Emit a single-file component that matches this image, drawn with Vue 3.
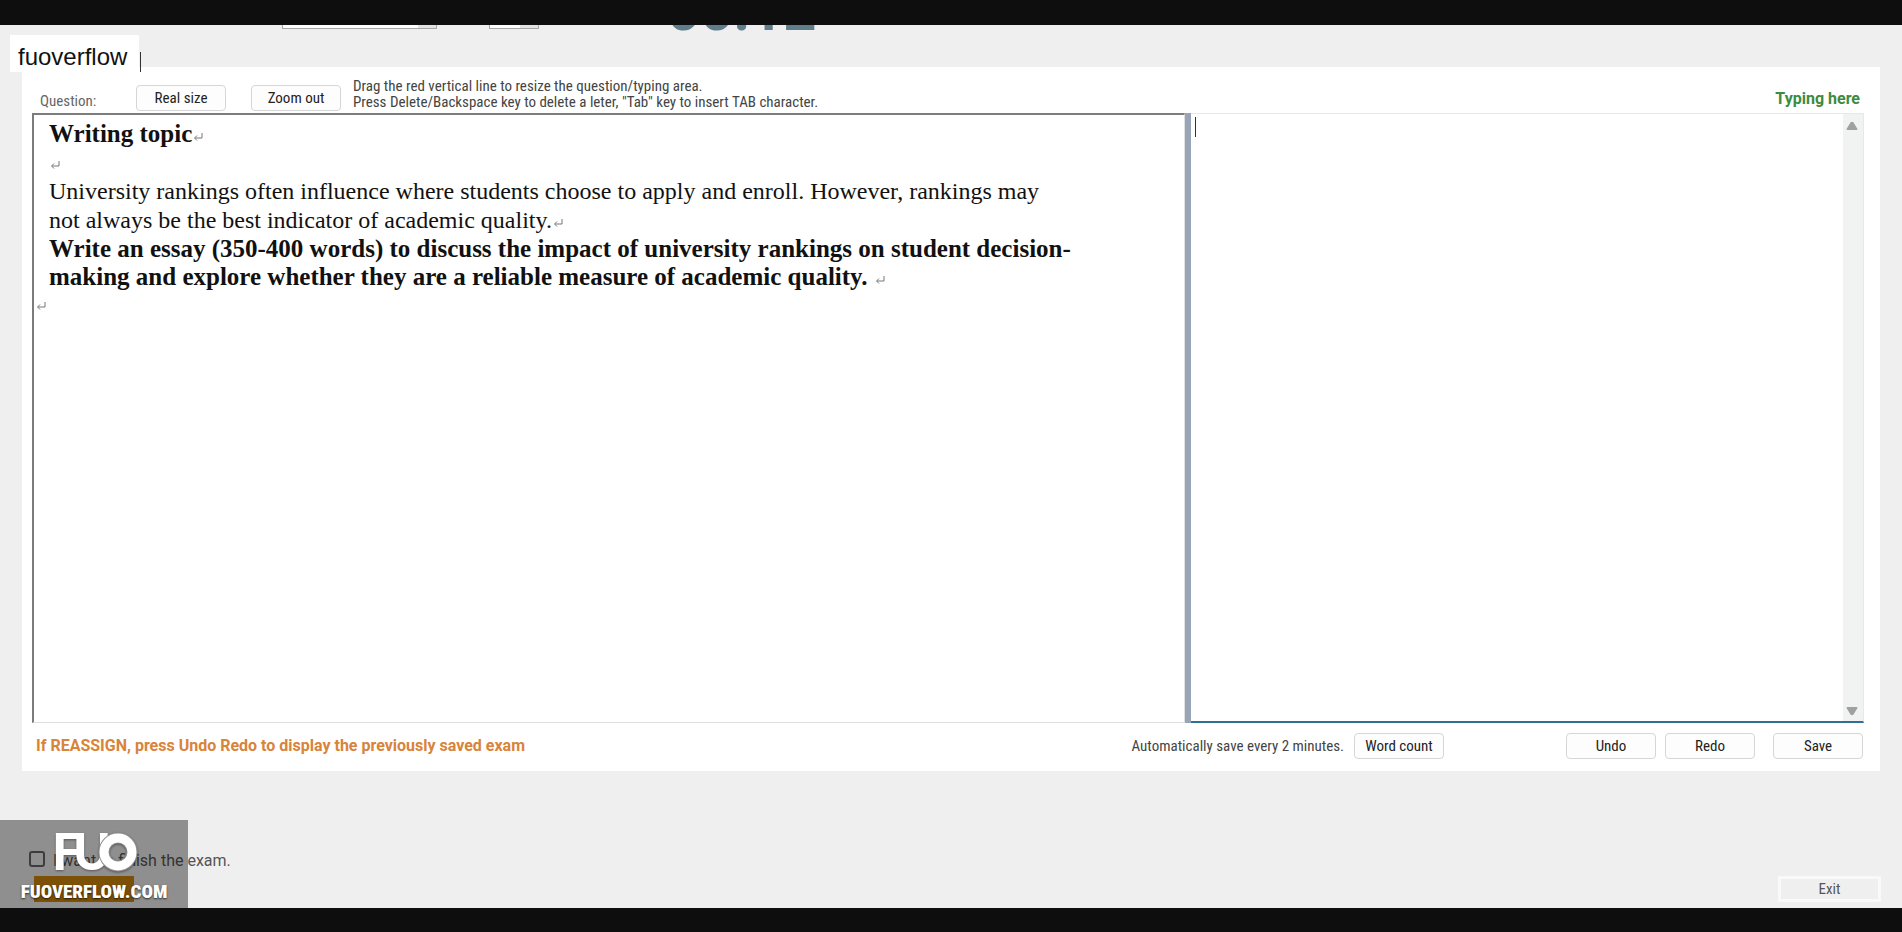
<script setup>
import { ref } from 'vue'

const answer = ref('')
const finished = ref(false)
</script>

<template>
  <div class="screen">
    <div class="bar"></div>

    <header class="head">
      <select class="combo wide" aria-label="Font"></select>
      <select class="combo small" aria-label="Size"></select>
      <span class="timer">00:12</span>
    </header>

    <main class="card">
      <div class="toolbar">
        <span class="label">Question:</span>
        <button type="button" class="btn">Real size</button>
        <button type="button" class="btn second">Zoom out</button>
        <p class="hint">
          Drag the red vertical line to resize the question/typing area.<br />
          Press Delete/Backspace key to delete a leter, "Tab" key to insert TAB character.
        </p>
        <label class="typing" for="answer">Typing here</label>
      </div>

      <div class="panes">
        <section class="question">
          <h1>Writing topic<svg class="ret" viewBox="0 0 10 9"><path d="M9 0v5H2M4 2.500L1.500 5L4 7.500" /></svg></h1>
          <p><svg class="ret" viewBox="0 0 10 9"><path d="M9 0v5H2M4 2.500L1.500 5L4 7.500" /></svg></p>
          <p>University rankings often influence where students choose to apply and enroll. However, rankings may not always be the best indicator of academic quality.<svg class="ret" viewBox="0 0 10 9"><path d="M9 0v5H2M4 2.500L1.500 5L4 7.500" /></svg></p>
          <p class="strong">Write an essay (350-400 words) to discuss the impact of university rankings on student decision-making and explore whether they are a reliable measure of academic quality. <svg class="ret" viewBox="0 0 10 9"><path d="M9 0v5H2M4 2.500L1.500 5L4 7.500" /></svg></p>
          <p class="outer"><svg class="ret" viewBox="0 0 10 9"><path d="M9 0v5H2M4 2.500L1.500 5L4 7.500" /></svg></p>
        </section>
        <div class="splitter"></div>
        <section class="editor">
          <textarea id="answer" v-model="answer"></textarea>
          <span class="caret"></span>
          <div class="scroll">
            <svg viewBox="0 0 12 9"><path d="M4.500 1.500Q6 0 7.500 1.500L11.500 8Q11.500 9 10.500 9H1.500Q.5 9 .5 8z" /></svg>
            <svg viewBox="0 0 12 9"><path d="M4.500 7.500Q6 9 7.500 7.500L11.500 1Q11.500 0 10.500 0H1.500Q.5 0 .5 1z" /></svg>
          </div>
        </section>
      </div>

      <div class="actions">
        <strong class="warn">If REASSIGN, press Undo Redo to display the previously saved exam</strong>
        <span class="auto">Automatically save every 2 minutes.</span>
        <button type="button" class="btn count">Word count</button>
        <button type="button" class="btn undo">Undo</button>
        <button type="button" class="btn redo">Redo</button>
        <button type="button" class="btn">Save</button>
      </div>
    </main>

    <footer class="foot">
      <div class="finish">
        <label class="check"><input v-model="finished" type="checkbox" /><span>I want to finish the exam.</span></label>
        <button type="button" class="submit" aria-label="Finish"></button>
      </div>
      <button type="button" class="exit">Exit</button>
    </footer>

    <div class="bar bottom"></div>

    <div class="tag">fuoverflow<i></i></div>
    <div class="mark">
      <svg class="logo" viewBox="0 0 90 42">
        <g class="letters">
          <text x="3" y="40">F</text>
          <text x="24" y="40">U</text>
          <circle cx="69" cy="22" r="14" class="edge" />
          <circle cx="69" cy="22" r="14" />
        </g>
      </svg>
      <span class="site">FUOVERFLOW.COM</span>
    </div>
  </div>
</template>

<style>
body {
  margin: 0;
}
</style>

<style scoped>
.screen {
  position: relative;
  display: flex;
  flex-direction: column;
  min-height: 100vh;
  background: #efefef;
  color: #444;
  font: 15px/16px "Roboto Condensed", Roboto, "Liberation Sans", sans-serif;
  overflow: hidden;
}
p, h1 {
  margin: 0;
}
button {
  font: inherit;
  padding: 0;
  box-sizing: border-box;
}
.bar {
  height: 25px;
  background: #0e0e0e;
}
.bar.bottom {
  height: 24px;
}
.head {
  display: flex;
  align-items: flex-start;
  height: 42px;
  padding-left: 282px;
  overflow: hidden;
}
.combo {
  appearance: none;
  box-sizing: border-box;
  height: 24px;
  margin-top: -20px;
  border: 1px solid #a8a8a8;
  border-radius: 0;
  background: linear-gradient(#e2e2e2, #e2e2e2) right / 18px 100% no-repeat #fff;
}
.wide {
  width: 155px;
}
.small {
  width: 50px;
  margin-left: 52px;
}
.timer {
  margin: -44px 0 0 128px;
  font: bold 58px/58px Roboto, Arial, sans-serif;
  color: #607d8b;
}
.card {
  flex: 1;
  display: flex;
  flex-direction: column;
  margin: 0 22px;
  padding: 0 16px 0 10px;
  background: #fefffe;
}
.toolbar {
  display: flex;
  align-items: flex-end;
  box-sizing: border-box;
  height: 46px;
  padding: 0 4px 2px 8px;
}
.label {
  width: 96px;
  padding-bottom: 2px;
  color: #666;
}
.btn {
  width: 90px;
  height: 26px;
  border: 1px solid #d6d6d6;
  border-radius: 4px;
  background: #fdfdfd;
  color: #222;
}
.second {
  margin-left: 25px;
}
.hint {
  margin-left: 12px;
  padding-bottom: 1px;
}
.typing {
  margin-left: auto;
  padding-bottom: 4px;
  font-family: Roboto, sans-serif;
  font-size: 16px;
  font-weight: bold;
  color: #3d8b40;
}
.panes {
  flex: 1;
  display: grid;
  grid-template-columns: 1153fr 6px 673fr;
}
.question {
  border: 1px solid #e0e0e0;
  border-top: 2px solid #7c7c7c;
  border-left: 2px solid #7c7c7c;
  padding: 4px 15px;
  color: #111;
  font: 24px/29px "Liberation Serif", "Times New Roman", serif;
}
.question h1,
.question .strong {
  font-size: 25px;
  line-height: 29px;
  font-weight: bold;
}
.question p {
  max-width: 1024px;
}
.question .strong {
  line-height: 28px;
}
.question .outer {
  margin-left: -14px;
  line-height: 24px;
}
.ret {
  width: 10px;
  height: 9px;
  margin-left: 1px;
  fill: none;
  stroke: #777;
  stroke-width: 1;
}
.splitter {
  background: #98a4b8;
}
.editor {
  position: relative;
  display: flex;
  border-top: 1px solid #e8e8e8;
  border-right: 1px solid #e8e8e8;
  border-bottom: 2px solid #2f6f98;
}
.editor textarea {
  flex: 1;
  min-width: 0;
  border: 0;
  padding: 3px;
  outline: 0;
  resize: none;
  background: #fefffe;
  font: inherit;
}
.caret {
  position: absolute;
  left: 4px;
  top: 3px;
  width: 1px;
  height: 20px;
  background: #333;
}
.scroll {
  display: flex;
  flex-direction: column;
  justify-content: space-between;
  align-items: center;
  width: 18px;
  padding: 7px 2px 5px 0;
  background: #f1f2f2;
}
.scroll svg {
  width: 12px;
  height: 9px;
  fill: #a0a0a0;
}
.actions {
  display: flex;
  align-items: center;
  box-sizing: border-box;
  height: 48px;
  padding: 0 1px 2px 4px;
}
.warn {
  font-family: Roboto, sans-serif;
  font-size: 16px;
  color: #d9833b;
}
.auto {
  margin-left: auto;
}
.count {
  margin: 0 122px 0 10px;
}
.undo {
  margin-right: 9px;
}
.redo {
  margin-right: 18px;
}
.foot {
  display: flex;
  justify-content: space-between;
  align-items: flex-end;
  box-sizing: border-box;
  height: 137px;
  padding: 0 21px 6px 29px;
}
.check {
  display: flex;
  align-items: flex-start;
  gap: 8px;
  color: #555;
  font: 16px/20px Roboto, "Liberation Sans", sans-serif;
}
.check input {
  appearance: none;
  box-sizing: border-box;
  width: 16px;
  height: 16px;
  margin: 0;
  border: 2px solid #666;
  border-radius: 3px;
}
.submit {
  display: block;
  width: 100px;
  height: 26px;
  margin: 5px 0 0 5px;
  border: 0;
  background: #d0850c;
}
.exit {
  width: 103px;
  height: 26px;
  border: 3px solid #f9f9f9;
  background: #efefef;
  color: #555;
}
.tag {
  position: absolute;
  left: 10px;
  top: 35px;
  box-sizing: border-box;
  width: 129px;
  height: 37px;
  padding-left: 8px;
  background: #fff;
  color: #111;
  font: 24px/43px "Liberation Sans", Arial, sans-serif;
}
.tag i {
  position: absolute;
  right: -2px;
  bottom: 0;
  width: 1px;
  height: 20px;
  background: #333;
}
.mark {
  position: absolute;
  left: 0;
  bottom: 24px;
  display: flex;
  flex-direction: column;
  align-items: center;
  box-sizing: border-box;
  width: 188px;
  height: 88px;
  padding-top: 10px;
  background: rgba(0, 0, 0, 0.4);
}
.logo {
  width: 90px;
  height: 42px;
  filter: drop-shadow(0 1px 1px rgba(0, 0, 0, 0.4));
}
.letters {
  font: 900 51px Lato, sans-serif;
  fill: #fff;
}
.letters circle {
  fill: none;
  stroke: #fff;
  stroke-width: 9;
}
.letters .edge {
  stroke: #8f8f8f;
  stroke-width: 11;
}
.site {
  margin-top: 9px;
  font: 900 19px/22px "Roboto Condensed", sans-serif;
  color: #fff;
  text-shadow: 0 1px 2px rgba(0, 0, 0, 0.7);
}
</style>
